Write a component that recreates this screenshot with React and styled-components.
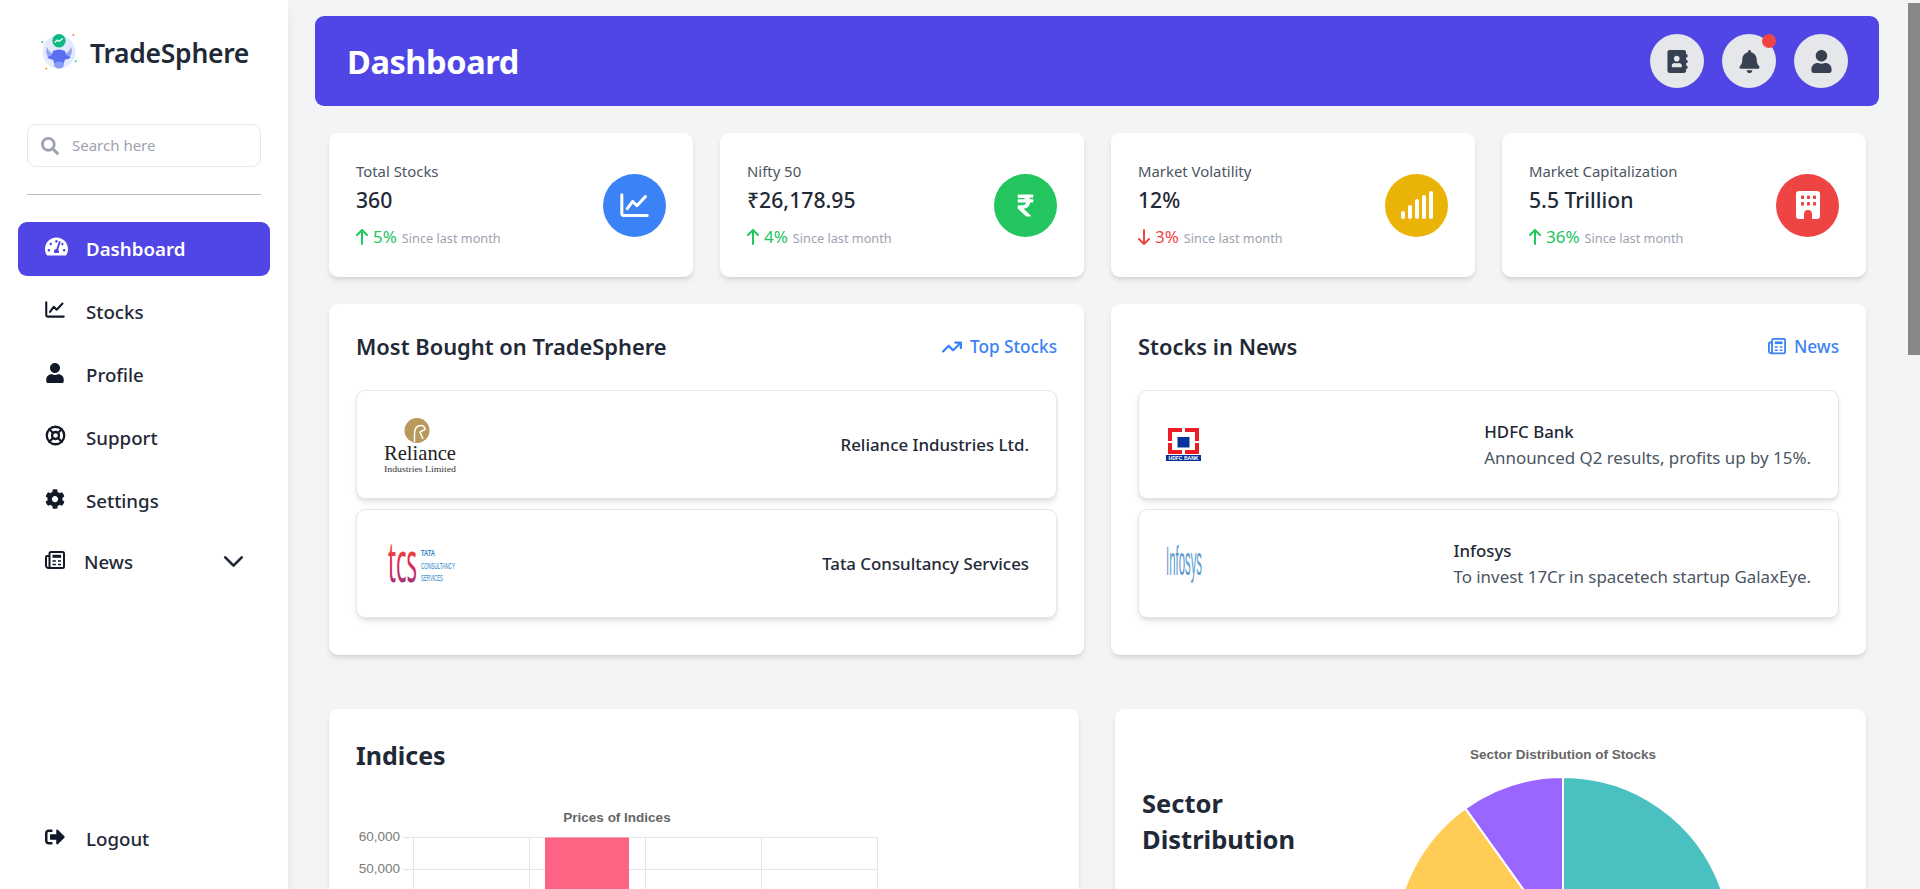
import styled, { createGlobalStyle } from "styled-components";
import {
  FaTachometerAlt,
  FaUser,
  FaCog,
  FaSignOutAlt,
  FaSearch,
  FaAddressBook,
  FaBell,
  FaRupeeSign,
} from "react-icons/fa";
import { FaArrowTrendUp } from "react-icons/fa6";
import { FiChevronDown } from "react-icons/fi";
import { LifeBuoy } from "lucide-react";

const GlobalStyle = createGlobalStyle`
  html, body {
    margin: 0;
    padding: 0;
    background: #f3f4f6;
    font-family: "Noto Sans", "Open Sans", sans-serif;
    overflow: hidden;
  }
  * { box-sizing: border-box; }
`;

const Shell = styled.div`
  display: flex;
  height: 100vh;
  background: #f3f4f6;
`;

const Sidebar = styled.aside`
  width: 288px;
  flex-shrink: 0;
  height: 100vh;
  background: #fff;
  display: flex;
  flex-direction: column;
  box-shadow: 0 10px 15px -3px rgba(0, 0, 0, 0.1), 0 4px 6px -4px rgba(0, 0, 0, 0.1);
  z-index: 2;
`;

const Brand = styled.div`
  display: flex;
  align-items: center;
  gap: 11px;
  height: 40px;
  margin: 33px 0 0 39px;
`;

const BrandName = styled.span`
  font-size: 26.5px;
  font-weight: 600;
  color: #1f2937;
  letter-spacing: -0.3px;
`;

const SearchBox = styled.label`
  display: flex;
  align-items: center;
  gap: 13px;
  height: 43px;
  margin: 51px 27px 0;
  padding: 0 13px;
  border: 1px solid #e5e7eb;
  border-radius: 9px;
  color: #9ca3af;
  font-size: 18px;
`;

const SearchInput = styled.input`
  border: 0;
  outline: 0;
  min-width: 0;
  flex: 1;
  padding: 0 0 2px;
  font: inherit;
  font-size: 15px;
  background: transparent;
  &::placeholder { color: #9ca3af; opacity: 1; }
`;

const Divider = styled.hr`
  margin: 27px 27px;
  border: 0;
  border-top: 1px solid #bbb;
`;

const NavList = styled.nav`
  display: flex;
  flex-direction: column;
  gap: 9px;
  margin: 0 18px;
`;

const NavItem = styled.a`
  display: flex;
  align-items: center;
  height: ${(p) => (p.$short ? "50px" : "54px")};
  padding: 0 0 1px 27px;
  border-radius: 9px;
  font-size: 18.7px;
  font-weight: ${(p) => (p.$active ? 600 : 500)};
  color: ${(p) => (p.$active ? "#fff" : "#1f2937")};
  background: ${(p) => (p.$active ? "#4f46e5" : "transparent")};
`;

const NavIcon = styled.span`
  width: ${(p) => p.$w || "41px"};
  flex-shrink: 0;
  display: flex;
  font-size: ${(p) => p.$size || "20px"};
  color: ${(p) => (p.$active ? "#fff" : "#111827")};
  transform: translateY(-2px);
`;

const NavChevron = styled.span`
  margin-left: auto;
  margin-right: 20px;
  display: flex;
  font-size: 33px;
`;

const LogoutWrap = styled.div`
  margin: auto 18px 23px;
`;

const Main = styled.main`
  flex: 1;
  min-width: 0;
  height: 100vh;
  overflow: hidden;
  padding: 16px 29px 0 27px;
`;

const Header = styled.header`
  height: 90px;
  background: #4f46e5;
  border-radius: 9px;
  display: flex;
  align-items: center;
  justify-content: space-between;
  padding: 0 31px 0 32px;
`;

const HeaderTitle = styled.h1`
  margin: 0;
  font-size: 32.5px;
  font-weight: 700;
  color: #fff;
  letter-spacing: -0.4px;
`;

const HeaderActions = styled.div`
  display: flex;
  gap: 18px;
`;

const RoundButton = styled.div`
  position: relative;
  width: 54px;
  height: 54px;
  border-radius: 50%;
  background: #e5e7eb;
  color: #374151;
  display: flex;
  align-items: center;
  justify-content: center;
  font-size: 23px;
`;

const Badge = styled.span`
  position: absolute;
  top: 0;
  right: 0;
  width: 14px;
  height: 14px;
  border-radius: 50%;
  background: #ef4444;
`;

const Content = styled.div`
  padding: 0 13px 0 14px;
`;

const StatGrid = styled.section`
  display: grid;
  grid-template-columns: repeat(4, 1fr);
  gap: 27px;
  margin-top: 27px;
`;

const Card = styled.div`
  background: #fff;
  border-radius: 9px;
  box-shadow: 0 4px 6px -1px rgba(0, 0, 0, 0.1), 0 2px 4px -2px rgba(0, 0, 0, 0.1);
`;

const StatCard = styled(Card)`
  height: 144px;
  padding: 27px;
  display: flex;
  align-items: center;
  justify-content: space-between;
`;

const StatLabel = styled.div`
  font-size: 14.9px;
  line-height: 23px;
  color: #4b5563;
`;

const StatValue = styled.div`
  font-size: 21.2px;
  line-height: 33px;
  font-weight: 500;
  color: #1f2937;
`;

const StatDelta = styled.div`
  display: flex;
  align-items: center;
  margin-top: 7px;
  height: 27px;
  font-size: 17px;
  gap: 5px;
  color: ${(p) => (p.$down ? "#ef4444" : "#22c55e")};
`;

const StatSince = styled.span`
  font-size: 12.7px;
  color: #9ca3af;
  padding-top: 2px;
`;

const StatCircle = styled.div`
  width: 63px;
  height: 63px;
  border-radius: 50%;
  background: ${(p) => p.$color};
  color: #fff;
  display: flex;
  align-items: center;
  justify-content: center;
  font-size: ${(p) => p.$size || "27px"};
`;

const PanelGrid = styled.section`
  display: grid;
  grid-template-columns: 1fr 1fr;
  gap: 27px;
  margin-top: 27px;
`;

const Panel = styled(Card)`
  padding: 27px;
`;

const PanelHead = styled.div`
  display: flex;
  align-items: center;
  justify-content: space-between;
  height: 31px;
  margin-bottom: 28px;
`;

const PanelTitle = styled.h2`
  margin: 0;
  font-size: 21.9px;
  font-weight: 600;
  color: #1f2937;
`;

const PanelLink = styled.a`
  display: flex;
  align-items: center;
  gap: 8px;
  font-size: 17.2px;
  font-weight: 500;
  color: #3b82f6;
  svg { font-size: 20px; }
`;

const ItemRow = styled.div`
  height: 109px;
  margin-bottom: 10px;
  padding: 0 27px;
  display: flex;
  align-items: center;
  justify-content: space-between;
  background: #fff;
  border: 1px solid #e5e7eb;
  border-radius: 9px;
  box-shadow: 0 4px 6px -1px rgba(0, 0, 0, 0.1), 0 2px 4px -2px rgba(0, 0, 0, 0.1);
  svg { display: block; flex-shrink: 0; overflow: visible; }
`;

const ItemName = styled.div`
  font-size: 16.85px;
  line-height: 25px;
  font-weight: 500;
  color: #1f2937;
`;

const ItemNote = styled.div`
  font-size: 16.9px;
  line-height: 27px;
  color: #4b5563;
`;

const LowerGrid = styled.section`
  display: grid;
  grid-template-columns: 750px 751px;
  gap: 36px;
  margin-top: 54px;
`;

const ChartCard = styled(Card)`
  height: 520px;
  padding: 27px;
`;

const SectorCard = styled(Card)`
  height: 520px;
  padding: 0 27px;
  display: flex;
`;

const ChartTitle = styled.h2`
  margin: 0;
  font-size: 25px;
  line-height: 38px;
  font-weight: 700;
  color: #1f2937;
`;

const SectorTitle = styled(ChartTitle)`
  width: 190px;
  flex-shrink: 0;
  margin: 76px 0 0;
  font-size: 25.5px;
  line-height: 36px;
`;

const ChartFrame = styled.div`
  margin-top: 27px;
  svg { display: block; }
`;

const PieFrame = styled.div`
  flex: 1;
  svg { display: block; }
`;

const ScrollTrack = styled.div`
  width: 12px;
  flex-shrink: 0;
  height: 100vh;
  padding-top: 3px;
  background: #f3f4f6;
`;

const ScrollThumb = styled.div`
  height: 352px;
  background: #888;
`;

const BullLogo = () => (
  <svg width="40" height="40" viewBox="0 1 40 40">
    <circle cx="20" cy="20" r="16.5" fill="#e3eafd" />
    <path d="M8 15c-1.5 4-1 8 2 10l4 1 2-4c-3 0-6-2-8-7zM32 15c1.5 4 1 8-2 10l-4 1-2-4c3 0 6-2 8-7z" fill="#93a5f0" />
    <path d="M14 19c2-1 4-1.500 6-1.500s4 .5 6 1.500l1 4 5 2c-2 2-4 2.500-6 2.500l-2 6c-1 2-2.500 2.500-4 2.500s-3-.5-4-2.500l-2-6c-2 0-4-.5-6-2.500l5-2z" fill="#5a6ff0" />
    <ellipse cx="20" cy="33" rx="5" ry="3.500" fill="#8c9df7" />
    <circle cx="20" cy="8.700" r="6.700" fill="#10b981" />
    <path d="M15.800 10.500l2.400-2.400 1.800 1.400 3.700-3" fill="none" stroke="#fff" strokeWidth="1.300" />
    <circle cx="34.300" cy="3" r="1" fill="#f47b8c" />
    <circle cx="3.300" cy="10" r="1" fill="#14c7a5" />
    <circle cx="36.700" cy="29.300" r="1" fill="#14c7a5" />
    <circle cx="7.300" cy="36.700" r="1" fill="#f59e0b" />
  </svg>
);

const ChartGlyph = ({ size = 20 }) => (
  <svg width={size} height={size * 0.85} viewBox="0 0 24 20.400" fill="none" stroke="currentColor" strokeLinecap="round" strokeLinejoin="round">
    <path d="M1.500 1.500V17c0 1 .6 1.700 1.700 1.700h19.300" strokeWidth="2.500" />
    <path d="M6 13l4.500-6 3.500 3.500L21 3" strokeWidth="2.500" />
  </svg>
);

const NewsGlyph = ({ size = 20 }) => (
  <svg width={size} height={size * 0.9} viewBox="0 0 20 18" fill="none" stroke="currentColor" strokeWidth="2">
    <rect x="4.500" y="1" width="14.500" height="16" rx="1.500" />
    <path d="M4.500 5H2a1 1 0 0 0-1 1v8.500A2.500 2.500 0 0 0 3.500 17h2" />
    <rect x="7.500" y="3.800" width="8.600" height="3" fill="currentColor" stroke="none" />
    <path d="M7.500 10h3.400M13 10h3M7.500 13.500h3.400M13 13.500h3" strokeWidth="1.700" />
  </svg>
);

const SignalGlyph = () => (
  <svg width="32" height="28" viewBox="0 0 32 28" fill="currentColor">
    <rect x="0" y="20" width="4" height="8" rx="2" />
    <rect x="7" y="14" width="4" height="14" rx="2" />
    <rect x="14" y="8" width="4" height="20" rx="2" />
    <rect x="21" y="4" width="4" height="24" rx="2" />
    <rect x="28" y="0" width="4" height="28" rx="2" />
  </svg>
);

const BuildingGlyph = ({ color }) => (
  <svg width="24" height="28" viewBox="0 0 24 28">
    <path d="M3 0h18a3 3 0 0 1 3 3v22a3 3 0 0 1-3 3h-5v-5a4 4 0 0 0-8 0v5H3a3 3 0 0 1-3-3V3a3 3 0 0 1 3-3z" fill="#fff" />
    {[5, 11, 17].map((x) =>
      [4.500, 11].map((y) => <rect key={`${x}-${y}`} x={x} y={y} width="3" height="3.500" rx="0.600" fill={color} />)
    )}
  </svg>
);

const DeltaArrow = ({ down }) => (
  <svg width="12" height="16" viewBox="0 0 12 16" fill="none" stroke="currentColor" strokeWidth="2" strokeLinecap="round" strokeLinejoin="round">
    {down ? <path d="M6 1v14M1 10l5 5 5-5" /> : <path d="M6 15V1M1 6l5-5 5 5" />}
  </svg>
);

const RelianceLogo = () => (
  <svg width="72" height="56" viewBox="0 0 72 56" fontFamily="'Liberation Serif', serif">
    <circle cx="33" cy="13.500" r="12.500" fill="#b79a5b" />
    <path d="M30.500 25V16c0-5 3-7.500 6-7.500 3 0 4.500 2 4.500 4l-5 2.500 3 7" fill="none" stroke="#fff" strokeWidth="1.500" />
    <text x="0" y="42.500" fontSize="21" fill="#222" textLength="72" lengthAdjust="spacingAndGlyphs">Reliance</text>
    <text x="0" y="54.500" fontSize="8" fill="#333" textLength="72" lengthAdjust="spacingAndGlyphs">Industries Limited</text>
  </svg>
);

const TcsLogo = () => (
  <svg width="72" height="44" viewBox="0 0 72 44">
    <defs>
      <linearGradient id="tcsGrad" x1="0" y1="0" x2="0" y2="1">
        <stop offset="0" stopColor="#f5a623" />
        <stop offset="0.5" stopColor="#e6284a" />
        <stop offset="1" stopColor="#7c3a9e" />
      </linearGradient>
    </defs>
    <text x="4" y="40" fontSize="56" fontFamily="'Noto Sans', sans-serif" fontWeight="400" fill="url(#tcsGrad)" textLength="29" lengthAdjust="spacingAndGlyphs">tcs</text>
    <text x="37" y="14" fontSize="9" fontWeight="700" fontFamily="'Liberation Sans', sans-serif" fill="#1f7fc4" textLength="14" lengthAdjust="spacingAndGlyphs">TATA</text>
    <text x="37" y="27" fontSize="9" fontFamily="'Liberation Sans', sans-serif" fill="#1f7fc4" textLength="34" lengthAdjust="spacingAndGlyphs">CONSULTANCY</text>
    <text x="37" y="39" fontSize="9" fontFamily="'Liberation Sans', sans-serif" fill="#1f7fc4" textLength="22" lengthAdjust="spacingAndGlyphs">SERVICES</text>
  </svg>
);

const HdfcLogo = () => (
  <svg width="35" height="33" viewBox="0 0 35 33">
    <path d="M2 0h14v4H6v9H2zM19 0h14v13h-4V4H19zM2 15h4v7h10v4H2zM33 15v11H19v-4h10v-7z" fill="#ed1c24" />
    <rect x="11.500" y="9" width="12" height="10.500" fill="#05319b" />
    <rect x="0" y="27" width="35" height="6" fill="#05319b" />
    <text x="17.500" y="32" fontSize="5" fontWeight="700" fontFamily="'Liberation Sans', sans-serif" fill="#fff" textAnchor="middle" textLength="30" lengthAdjust="spacingAndGlyphs">HDFC BANK</text>
  </svg>
);

const InfosysLogo = () => (
  <svg width="36" height="38" viewBox="0 0 36 38">
    <text x="0" y="30" fontSize="41" fontFamily="'Liberation Sans', sans-serif" fill="#5b9bd0" textLength="36" lengthAdjust="spacingAndGlyphs">Infosys</text>
  </svg>
);

const gridX = [57, 173, 289, 405, 521];
const bars = [
  { x: 68, v: 26178, color: "#36a2eb" },
  { x: 189, v: 60000, color: "#ff6384" },
  { x: 300, v: 38000, color: "#ffcd56" },
  { x: 416, v: 24000, color: "#4bc0c0" },
];
const ticks = [60000, 50000, 40000, 30000, 20000, 10000, 0];

const BarChart = () => (
  <svg width="694" height="320" viewBox="0 0 694 320" fontFamily="'Liberation Sans', Arial, sans-serif">
    <text x="261" y="20.500" textAnchor="middle" fontSize="13.500" fontWeight="700" fill="#666">Prices of Indices</text>
    {ticks.map((t, i) => (
      <g key={t}>
        <line x1="47" x2="521" y1={36.5 + i * 32} y2={36.5 + i * 32} stroke="#e5e5e5" />
        <text x="44" y={40 + i * 32} textAnchor="end" fontSize="13.500" fill="#7a7a7a">{t.toLocaleString("en-US")}</text>
      </g>
    ))}
    {gridX.map((x) => (
      <line key={x} x1={x + 0.5} x2={x + 0.5} y1="36" y2="234" stroke="#e5e5e5" />
    ))}
    {bars.map((b) => {
      const h = (b.v / 60000) * 192;
      return <rect key={b.x} x={b.x} y={228.5 - h} width="84" height={h} fill={b.color} />;
    })}
  </svg>
);

const slices = [
  { from: -35.6, to: 0, color: "#9966ff" },
  { from: 0, to: 140, color: "#4bc0c0" },
  { from: 140, to: 270, color: "#ff6384" },
  { from: 270, to: 324.4, color: "#ffcd56" },
];

const wedge = (from, to, r, cx, cy) => {
  const p = (a) => [cx + r * Math.sin((a * Math.PI) / 180), cy - r * Math.cos((a * Math.PI) / 180)];
  const [x1, y1] = p(from);
  const [x2, y2] = p(to);
  return `M${cx} ${cy}L${x1} ${y1}A${r} ${r} 0 ${to - from > 180 ? 1 : 0} 1 ${x2} ${y2}Z`;
};

const PieChart = () => (
  <svg width="534" height="460" viewBox="0 0 534 460" fontFamily="'Liberation Sans', Arial, sans-serif">
    <text x="231" y="50" textAnchor="middle" fontSize="13.500" fontWeight="700" fill="#666">Sector Distribution of Stocks</text>
    {slices.map((s) => (
      <path key={s.color} d={wedge(s.from, s.to, 168, 231, 236)} fill={s.color} stroke="#fff" strokeWidth="2" />
    ))}
  </svg>
);

const stats = [
  { label: "Total Stocks", value: "360", delta: "5%", color: "#3b82f6", icon: <ChartGlyph size={29} /> },
  { label: "Nifty 50", value: "₹26,178.95", delta: "4%", color: "#22c55e", icon: <FaRupeeSign />, size: "25px" },
  { label: "Market Volatility", value: "12%", delta: "3%", down: true, color: "#eab308", icon: <SignalGlyph /> },
  { label: "Market Capitalization", value: "5.5 Trillion", delta: "36%", color: "#ef4444", icon: <BuildingGlyph color="#ef4444" /> },
];

const navItems = [
  { label: "Stocks", icon: <ChartGlyph size={20} /> },
  { label: "Profile", icon: <FaUser /> },
  { label: "Support", icon: <LifeBuoy size={21} strokeWidth={2.6} /> },
  { label: "Settings", icon: <FaCog /> },
];

const App = () => {
  return (
    <Shell>
      <GlobalStyle />
      <Sidebar>
        <Brand>
          <BullLogo />
          <BrandName>TradeSphere</BrandName>
        </Brand>
        <SearchBox>
          <FaSearch />
          <SearchInput placeholder="Search here" />
        </SearchBox>
        <Divider />
        <NavList>
          <NavItem $active>
            <NavIcon $active $size="23px"><FaTachometerAlt /></NavIcon>
            Dashboard
          </NavItem>
          {navItems.map(({ label, icon }) => (
            <NavItem key={label}>
              <NavIcon>{icon}</NavIcon>
              {label}
            </NavItem>
          ))}
          <NavItem $short>
            <NavIcon $w="39px"><NewsGlyph /></NavIcon>
            News
            <NavChevron><FiChevronDown /></NavChevron>
          </NavItem>
        </NavList>
        <LogoutWrap>
          <NavItem>
            <NavIcon><FaSignOutAlt /></NavIcon>
            Logout
          </NavItem>
        </LogoutWrap>
      </Sidebar>
      <Main>
        <Header>
          <HeaderTitle>Dashboard</HeaderTitle>
          <HeaderActions>
            <RoundButton><FaAddressBook /></RoundButton>
            <RoundButton><FaBell /><Badge /></RoundButton>
            <RoundButton><FaUser /></RoundButton>
          </HeaderActions>
        </Header>
        <Content>
          <StatGrid>
            {stats.map(({ label, value, delta, down, color, icon, size }) => (
              <StatCard key={label}>
                <div>
                  <StatLabel>{label}</StatLabel>
                  <StatValue>{value}</StatValue>
                  <StatDelta $down={down}>
                    <DeltaArrow down={down} />
                    {delta}
                    <StatSince>Since last month</StatSince>
                  </StatDelta>
                </div>
                <StatCircle $color={color} $size={size}>{icon}</StatCircle>
              </StatCard>
            ))}
          </StatGrid>
          <PanelGrid>
            <Panel>
              <PanelHead>
                <PanelTitle>Most Bought on TradeSphere</PanelTitle>
                <PanelLink><FaArrowTrendUp />Top Stocks</PanelLink>
              </PanelHead>
              <ItemRow>
                <RelianceLogo />
                <ItemName>Reliance Industries Ltd.</ItemName>
              </ItemRow>
              <ItemRow>
                <TcsLogo />
                <ItemName>Tata Consultancy Services</ItemName>
              </ItemRow>
            </Panel>
            <Panel>
              <PanelHead>
                <PanelTitle>Stocks in News</PanelTitle>
                <PanelLink><NewsGlyph size={18} />News</PanelLink>
              </PanelHead>
              <ItemRow>
                <HdfcLogo />
                <div>
                  <ItemName>HDFC Bank</ItemName>
                  <ItemNote>Announced Q2 results, profits up by 15%.</ItemNote>
                </div>
              </ItemRow>
              <ItemRow>
                <InfosysLogo />
                <div>
                  <ItemName>Infosys</ItemName>
                  <ItemNote>To invest 17Cr in spacetech startup GalaxEye.</ItemNote>
                </div>
              </ItemRow>
            </Panel>
          </PanelGrid>
          <LowerGrid>
            <ChartCard>
              <ChartTitle>Indices</ChartTitle>
              <ChartFrame><BarChart /></ChartFrame>
            </ChartCard>
            <SectorCard>
              <SectorTitle>Sector Distribution</SectorTitle>
              <PieFrame><PieChart /></PieFrame>
            </SectorCard>
          </LowerGrid>
        </Content>
      </Main>
      <ScrollTrack><ScrollThumb /></ScrollTrack>
    </Shell>
  );
};

export default App;
